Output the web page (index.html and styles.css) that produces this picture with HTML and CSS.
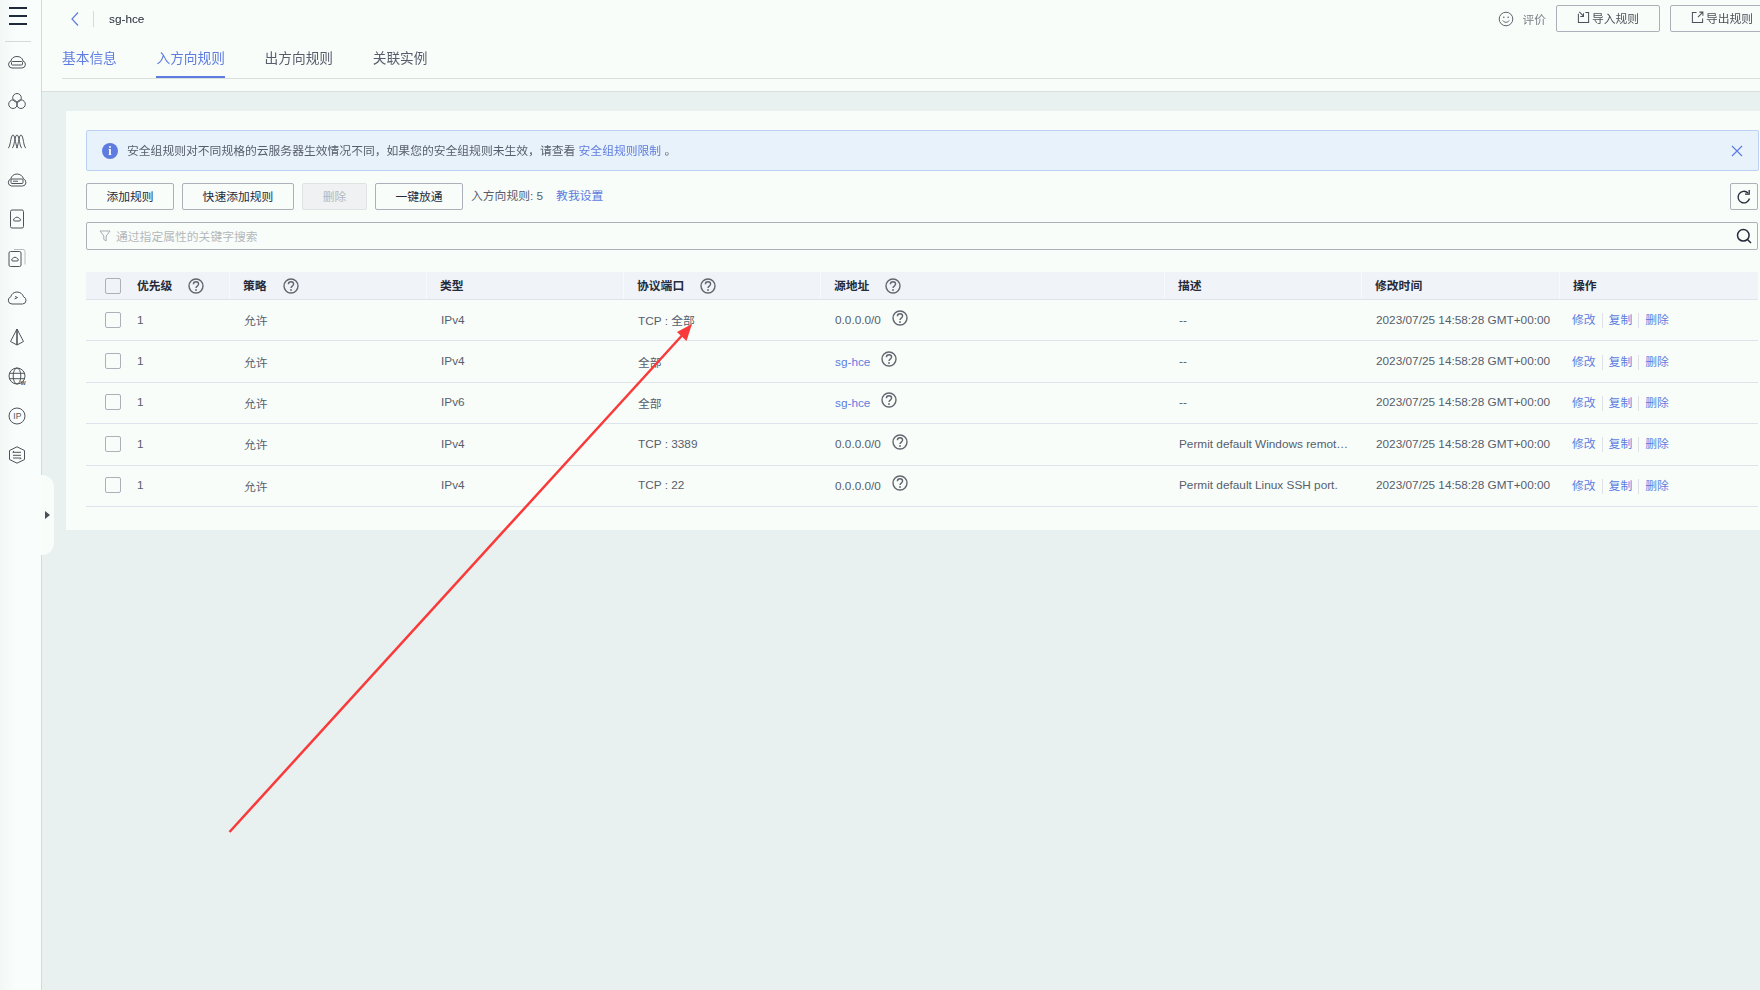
FILE: index.html
```html
<!DOCTYPE html>
<html lang="zh-CN">
<head>
    <meta charset="UTF-8">
    <title>sg-hce</title>
    <link rel="stylesheet" href="styles.css">
</head>
<body>
    <!-- Icon Sprites -->
    <svg class="sprites" width="0" height="0">
        <symbol id="help" viewBox="0 0 16 16">
            <circle cx="8" cy="8" r="7" fill="none" stroke="#62666e" stroke-width="1.400"/>
            <path d="M5.400 6.200c0-1.500 1.200-2.400 2.600-2.400s2.600.9 2.600 2.300c0 2-2.600 2-2.600 3.800" fill="none" stroke="#62666e" stroke-width="1.400"/>
            <circle cx="8" cy="12" r=".9" fill="#62666e"/>
        </symbol>
    </svg>

    <!-- Sidebar -->
    <aside class="sidebar">
        <div class="burger"><span></span><span></span><span></span></div>
        <div class="side-line"></div>
        <nav class="side-icons">
            <svg viewBox="0 0 20 20"><path d="M5 16h10a3.600 3.600 0 0 0 1-7C15.600 6 13 4.500 10 4.500S4.400 6 4 9a3.600 3.600 0 0 0 1 7z"/><rect x="4.500" y="9.500" width="11" height="3.500" rx=".8"/></svg>
            <svg viewBox="0 0 20 20"><circle cx="10" cy="6.800" r="4.300"/><circle cx="6" cy="13.200" r="4.300"/><circle cx="14" cy="13.200" r="4.300"/></svg>
            <svg viewBox="0 0 20 20"><path d="M1 17C3.500 17 3.500 4 6 4s2.500 13 5 13"/><path d="M5 17C7.500 17 7.500 4 10 4s2.500 13 5 13"/><path d="M9 17c2.500 0 2.500-13 5-13s2.500 13 5 13"/></svg>
            <svg viewBox="0 0 20 20"><path d="M4.500 16h11a3.600 3.600 0 0 0 1-7C16 6 13 4 10 4S4.300 6 3.800 9a3.600 3.600 0 0 0 .7 7z"/><rect x="4" y="9" width="12" height="4.500" rx="1"/><path d="M6 11.200h5"/></svg>
            <svg viewBox="0 0 20 20"><rect x="3.500" y="1" width="13" height="18" rx="1.500"/><path d="M7.800 12h4.400a1.200 1.200 0 0 0 .2-2.400c-.3-1.900-4.500-1.900-4.800 0a1.200 1.200 0 0 0 .2 2.400z"/></svg>
            <svg viewBox="0 0 20 20"><path class="faint" d="M7 1.500h9a2 2 0 0 1 2 2v13"/><rect x="2" y="3.500" width="12" height="15" rx="1.500"/><path d="M6 13h4a1.200 1.200 0 0 0 .2-2.400c-.3-1.800-4.100-1.800-4.400 0A1.200 1.200 0 0 0 6 13z"/></svg>
            <svg viewBox="0 0 20 20"><path d="M5 16h10.500a3.700 3.700 0 0 0 1-7.200C16 6 13 4 10 4S4.300 6 3.800 8.800A3.700 3.700 0 0 0 5 16z"/><path d="M8 8.500l2.500 1-3 1.500"/></svg>
            <svg viewBox="0 0 20 20"><path d="M10 2L3.500 14.500 10 18l6.500-3.500z"/><path d="M10 2v16" stroke-width="1.600"/></svg>
            <svg viewBox="0 0 20 20"><circle cx="10" cy="10" r="8"/><ellipse cx="10" cy="10" rx="3.800" ry="8"/><path d="M2 7.300h16M2 12.700h16"/><text class="side-w" x="13.500" y="18.500">W</text></svg>
            <svg viewBox="0 0 20 20"><circle cx="10" cy="10" r="8"/><text class="side-ip" x="6.300" y="13">IP</text></svg>
            <svg viewBox="0 0 20 20"><path d="M10 1.800l7.500 3.700v9L10 18.200l-7.500-3.700v-9z"/><path d="M6 7.300h8M6 10.300h8M6 13h8M7 6l-1.500 1.300M13 14.300l1.300-1.300"/></svg>
        </nav>
    </aside>
    <div class="side-toggle"><span class="toggle-arrow"></span></div>

    <main class="main">
        <!-- Top Header -->
        <header class="top">
            <div class="title-row">
                <svg class="back" viewBox="0 0 10 16"><path d="M8 1.500L2 8l6 6.500"/></svg>
                <span class="title-sep"></span>
                <span class="title">sg-hce</span>
                <div class="top-actions">
                    <svg class="smile" viewBox="0 0 16 16"><circle cx="8" cy="8" r="6.800"/><path d="M4.800 9.500c1.500 2.400 4.900 2.400 6.400 0"/><circle class="dot" cx="5.800" cy="6.300" r=".8"/><circle class="dot" cx="10.200" cy="6.300" r=".8"/></svg>
                    <span class="rate">评价</span>
                    <button class="btn btn-top"><svg class="io-icon" viewBox="0 0 14 14"><path d="M1.500 3v9.500h11V1.500H9"/><path d="M2.500 1l4.500 4.500M3.500 5.800h3.500V2.500" /></svg>导入规则</button>
                    <button class="btn btn-top"><svg class="io-icon" viewBox="0 0 14 14"><path d="M6 1.500H1.500v11h11V8"/><path d="M7.500 6.500L12.500 1.500M9 1.200h3.800V5"/></svg>导出规则</button>
                </div>
            </div>
            <div class="tabs">
                <a class="tab link-tab">基本信息</a>
                <a class="tab active">入方向规则</a>
                <a class="tab">出方向规则</a>
                <a class="tab">关联实例</a>
            </div>
        </header>

        <section class="card">
            <!-- Alert -->
            <div class="alert">
                <span class="info-icon">i</span>
                <span class="alert-text">安全组规则对不同规格的云服务器生效情况不同，如果您的安全组规则未生效，请查看 <a class="link">安全组规则限制</a> 。</span>
                <svg class="alert-close" viewBox="0 0 12 12"><path d="M1 1l10 10M11 1L1 11"/></svg>
            </div>

            <!-- Toolbar -->
            <div class="toolbar">
                <button class="btn w-88">添加规则</button>
                <button class="btn w-112">快速添加规则</button>
                <button class="btn btn-off">删除</button>
                <button class="btn w-88">一键放通</button>
                <span class="count">入方向规则: 5</span>
                <a class="link">教我设置</a>
                <button class="btn btn-refresh"><svg viewBox="0 0 16 16"><path d="M13.500 9.500A5.800 5.800 0 1 1 12 4"/><path d="M13.200 1v4.200H9"/></svg></button>
            </div>

            <!-- Search -->
            <div class="search">
                <svg class="filter" viewBox="0 0 12 12"><path d="M1 1h10L7.200 6v4.800L4.800 9.500V6z"/></svg>
                <span class="placeholder">通过指定属性的关键字搜索</span>
                <svg class="search-icon" viewBox="0 0 16 16"><circle cx="7.300" cy="7.300" r="5.800"/><path d="M11.500 11.500L15 15"/></svg>
            </div>

            <!-- Rules Table -->
            <div class="table">
                <div class="row head">
                    <div class="cell first"><span class="check"></span><span class="th">优先级</span><svg class="help"><use href="#help"/></svg></div>
                    <div class="cell"><span class="th">策略</span><svg class="help"><use href="#help"/></svg></div>
                    <div class="cell"><span class="th">类型</span></div>
                    <div class="cell"><span class="th">协议端口</span><svg class="help"><use href="#help"/></svg></div>
                    <div class="cell"><span class="th">源地址</span><svg class="help"><use href="#help"/></svg></div>
                    <div class="cell"><span class="th">描述</span></div>
                    <div class="cell"><span class="th">修改时间</span></div>
                    <div class="cell"><span class="th">操作</span></div>
                </div>

                <div class="row">
                    <div class="cell first"><span class="check"></span><span>1</span></div>
                    <div class="cell"><span>允许</span></div>
                    <div class="cell"><span>IPv4</span></div>
                    <div class="cell"><span>TCP : 全部</span></div>
                    <div class="cell src"><span class="src-text">0.0.0.0/0</span><svg class="help"><use href="#help"/></svg></div>
                    <div class="cell"><span class="dash">--</span></div>
                    <div class="cell"><span>2023/07/25 14:58:28 GMT+00:00</span></div>
                    <div class="cell ops"><a>修改</a><a>复制</a><a>删除</a></div>
                </div>
                <div class="row">
                    <div class="cell first"><span class="check"></span><span>1</span></div>
                    <div class="cell"><span>允许</span></div>
                    <div class="cell"><span>IPv4</span></div>
                    <div class="cell"><span>全部</span></div>
                    <div class="cell src"><a class="src-text sg">sg-hce</a><svg class="help"><use href="#help"/></svg></div>
                    <div class="cell"><span class="dash">--</span></div>
                    <div class="cell"><span>2023/07/25 14:58:28 GMT+00:00</span></div>
                    <div class="cell ops"><a>修改</a><a>复制</a><a>删除</a></div>
                </div>
                <div class="row">
                    <div class="cell first"><span class="check"></span><span>1</span></div>
                    <div class="cell"><span>允许</span></div>
                    <div class="cell"><span>IPv6</span></div>
                    <div class="cell"><span>全部</span></div>
                    <div class="cell src"><a class="src-text sg">sg-hce</a><svg class="help"><use href="#help"/></svg></div>
                    <div class="cell"><span class="dash">--</span></div>
                    <div class="cell"><span>2023/07/25 14:58:28 GMT+00:00</span></div>
                    <div class="cell ops"><a>修改</a><a>复制</a><a>删除</a></div>
                </div>
                <div class="row">
                    <div class="cell first"><span class="check"></span><span>1</span></div>
                    <div class="cell"><span>允许</span></div>
                    <div class="cell"><span>IPv4</span></div>
                    <div class="cell"><span>TCP : 3389</span></div>
                    <div class="cell src"><span class="src-text">0.0.0.0/0</span><svg class="help"><use href="#help"/></svg></div>
                    <div class="cell"><span>Permit default Windows remot…</span></div>
                    <div class="cell"><span>2023/07/25 14:58:28 GMT+00:00</span></div>
                    <div class="cell ops"><a>修改</a><a>复制</a><a>删除</a></div>
                </div>
                <div class="row">
                    <div class="cell first"><span class="check"></span><span>1</span></div>
                    <div class="cell"><span>允许</span></div>
                    <div class="cell"><span>IPv4</span></div>
                    <div class="cell"><span>TCP : 22</span></div>
                    <div class="cell src"><span class="src-text">0.0.0.0/0</span><svg class="help"><use href="#help"/></svg></div>
                    <div class="cell"><span>Permit default Linux SSH port.</span></div>
                    <div class="cell"><span>2023/07/25 14:58:28 GMT+00:00</span></div>
                    <div class="cell ops"><a>修改</a><a>复制</a><a>删除</a></div>
                </div>
            </div>
        </section>
    </main>

    <!-- Red annotation arrow drawn over the page -->
    <svg class="annotation" viewBox="0 0 1760 990">
        <path d="M229.500 832L687 330" stroke="#f93a3a" stroke-width="2.500" fill="none"/>
        <path d="M692 324L677 332L686.500 341z" fill="#f93a3a"/>
    </svg>
</body>
</html>
```

FILE: styles.css
```css
/* General Reset */
* {
    margin: 0;
    padding: 0;
    box-sizing: border-box;
}

body {
    background-color: #e9f0f0;
    color: #575d6c;
    font-family: 'Liberation Sans', 'Noto Sans CJK SC', sans-serif;
    font-size: 11.800px;
    display: flex;
    width: 1760px;
    height: 990px;
    overflow: hidden;
    position: relative;
    filter: blur(0.35px);
}

a {
    color: #5e7ce0;
}

.sprites {
    position: absolute;
}

/* Sidebar */
.sidebar {
    width: 42px;
    flex-shrink: 0;
    background: linear-gradient(90deg, #f3f7f6, #f9fdfb 40%);
    border-right: 1px solid #d3dada;
    padding-top: 7px;
}

.burger {
    margin-left: 9px;
    width: 18px;
    display: flex;
    flex-direction: column;
    gap: 6px;
}

.burger span {
    height: 2px;
    background: #1f2b3a;
}

.side-line {
    height: 1px;
    width: 26px;
    margin: 16px 0 10px 5px;
    background: #d5dada;
}

.side-icons {
    display: flex;
    flex-direction: column;
    gap: 19.300px;
    padding-left: 7px;
}

.side-icons svg {
    width: 20px;
    height: 20px;
    fill: none;
    stroke: #4f545c;
    stroke-width: 1;
}

.side-icons .faint {
    stroke: #b9bdc2;
}

.side-icons text {
    stroke: none;
    fill: #4f545c;
}

.side-w {
    font-size: 5.500px;
    font-weight: 700;
}

.side-ip {
    font-size: 8.500px;
}

.side-toggle {
    position: absolute;
    left: 41px;
    top: 475px;
    width: 13px;
    height: 80px;
    background: #f8fdfa;
    border-radius: 0 12px 12px 0;
    display: flex;
    align-items: center;
    justify-content: center;
}

.toggle-arrow {
    border-left: 5px solid #4a4f58;
    border-top: 4px solid transparent;
    border-bottom: 4px solid transparent;
}

/* Main */
.main {
    flex: 1;
    min-width: 0;
}

.top {
    height: 92px;
    background: #f8fdfa;
    border-bottom: 1px solid #d9dfdf;
    padding-left: 20px;
}

.title-row {
    height: 39px;
    padding-bottom: 2px;
    display: flex;
    align-items: center;
}

.back {
    width: 10px;
    height: 16px;
    margin-left: 8px;
    fill: none;
    stroke: #5e7ce0;
    stroke-width: 1.200;
}

.title-sep {
    width: 1px;
    height: 16px;
    margin-left: 13px;
    background: #d5dada;
}

.title {
    margin-left: 15px;
    color: #252b3a;
}

.top-actions {
    margin-left: auto;
    margin-right: -14px;
    display: flex;
    align-items: center;
    flex-shrink: 0;
}

.smile {
    width: 16px;
    height: 16px;
    fill: none;
    stroke: #5f646c;
    stroke-width: 1;
}

.smile .dot {
    fill: #5f646c;
    stroke: none;
}

.rate {
    margin-left: 8px;
    color: #7b8088;
}

.btn {
    height: 27px;
    padding-bottom: 3px;
    background: transparent;
    border: 1px solid #adb0b8;
    border-radius: 2px;
    color: #252b3a;
    font-family: inherit;
    font-size: 11.800px;
    display: flex;
    align-items: center;
    justify-content: center;
}

.btn-top {
    width: 104px;
    margin-left: 10px;
    color: #4b505a;
}

.io-icon {
    width: 13px;
    height: 13px;
    margin-right: 2px;
    fill: none;
    stroke: #4b505a;
    stroke-width: 1.100;
}

.tabs {
    display: flex;
    gap: 39.700px;
    height: 40px;
    border-bottom: 1px solid #d9dfdf;
}

.tab {
    height: 39px;
    font-size: 13.700px;
    line-height: 39px;
    color: #575d6c;
}

.link-tab {
    color: #5e7ce0;
}

.tab.active {
    color: #5e7ce0;
    border-bottom: 2px solid #5e7ce0;
}

/* Card */
.card {
    margin: 19px 0 0 24px;
    padding: 19px 2px 23px 20px;
    background: #f8fdfa;
}

.alert {
    height: 41px;
    margin-right: -1px;
    padding: 0 15px;
    display: flex;
    align-items: center;
    background: #e8f2fa;
    border: 1px solid #bcd0f5;
    border-radius: 2px;
}

.alert-text {
    padding-bottom: 3px;
}

.info-icon {
    width: 16px;
    height: 16px;
    margin-right: 9px;
    border-radius: 50%;
    background: #5e7ce0;
    color: #fff;
    font: bold 12px/16px 'Liberation Serif', serif;
    text-align: center;
}

.link {
    color: #5e7ce0;
}

.alert-close {
    width: 12px;
    height: 12px;
    margin-left: auto;
    fill: none;
    stroke: #5e7ce0;
    stroke-width: 1.200;
}

/* Toolbar */
.toolbar {
    margin-top: 12px;
    display: flex;
    align-items: center;
}

.w-88 {
    width: 88px;
}

.w-112 {
    width: 112px;
    margin: 0 8px;
}

.btn-off {
    width: 65px;
    margin-right: 8px;
    background: #eff1f2;
    border-color: #e0e3e4;
    color: #b5b8bc;
}

.count {
    margin-left: 8px;
    margin-right: 13px;
    padding-bottom: 4px;
}

.toolbar .link {
    padding-bottom: 4px;
}

.btn-refresh {
    width: 28px;
    margin-left: auto;
    padding-bottom: 0;
}

.btn-refresh svg {
    width: 16px;
    height: 16px;
    fill: none;
    stroke: #252b3a;
    stroke-width: 1.300;
}

/* Search */
.search {
    height: 28px;
    margin-top: 12px;
    padding: 0 5px 0 12px;
    display: flex;
    align-items: center;
    border: 1px solid #adb0b8;
    border-radius: 2px;
}

.filter {
    width: 12px;
    height: 12px;
    margin-right: 5px;
    fill: none;
    stroke: #a8abb2;
    stroke-width: 1;
}

.placeholder {
    color: #b5b8bc;
    padding-bottom: 2px;
}

.search-icon {
    width: 16px;
    height: 16px;
    margin-left: auto;
    fill: none;
    stroke: #252b3a;
    stroke-width: 1.500;
}

/* Table */
.table {
    margin-top: 22px;
}

.row {
    display: grid;
    grid-template-columns: 143px 197px 197px 197px 344px 197px 198px 198px;
    height: 41.400px;
    border-bottom: 1px solid #dfe4ec;
}

.row.head {
    height: 28px;
    background: #f0f3f8;
    color: #252b3a;
    font-weight: 700;
}

.th {
    margin-top: -3px;
}

.cell {
    display: flex;
    align-items: center;
    padding-left: 13px;
    min-width: 0;
    border-left: 1px solid transparent;
}

.head .cell {
    border-left-color: #f8fbfb;
}

.head .cell:first-child {
    border-left-color: transparent;
}

.row:not(.head) .cell {
    padding-left: 14px;
    padding-bottom: 1px;
}

.cell.first,
.row:not(.head) .cell.first {
    padding-left: 18px;
}

.ops.cell,
.row:not(.head) .ops.cell {
    padding-left: 12px;
}

.check {
    width: 16px;
    height: 16px;
    margin-right: 16px;
    border: 1px solid #adb0b8;
    border-radius: 2px;
    flex-shrink: 0;
}

.help {
    width: 16px;
    height: 16px;
    margin-left: 16px;
    flex-shrink: 0;
}

.src .help {
    margin-left: 11px;
    margin-top: -4px;
}

.src-text {
    margin-top: 1px;
}

.sg {
    color: #5e7ce0;
}

.ops a {
    margin-top: 2px;
    padding-right: 6px;
    margin-right: 6px;
    border-right: 1px solid #dfe1e6;
    line-height: 15px;
}

.ops a:last-child {
    border-right: none;
}

/* Annotation */
.annotation {
    position: absolute;
    left: 0;
    top: 0;
    width: 1760px;
    height: 990px;
    pointer-events: none;
}
```
